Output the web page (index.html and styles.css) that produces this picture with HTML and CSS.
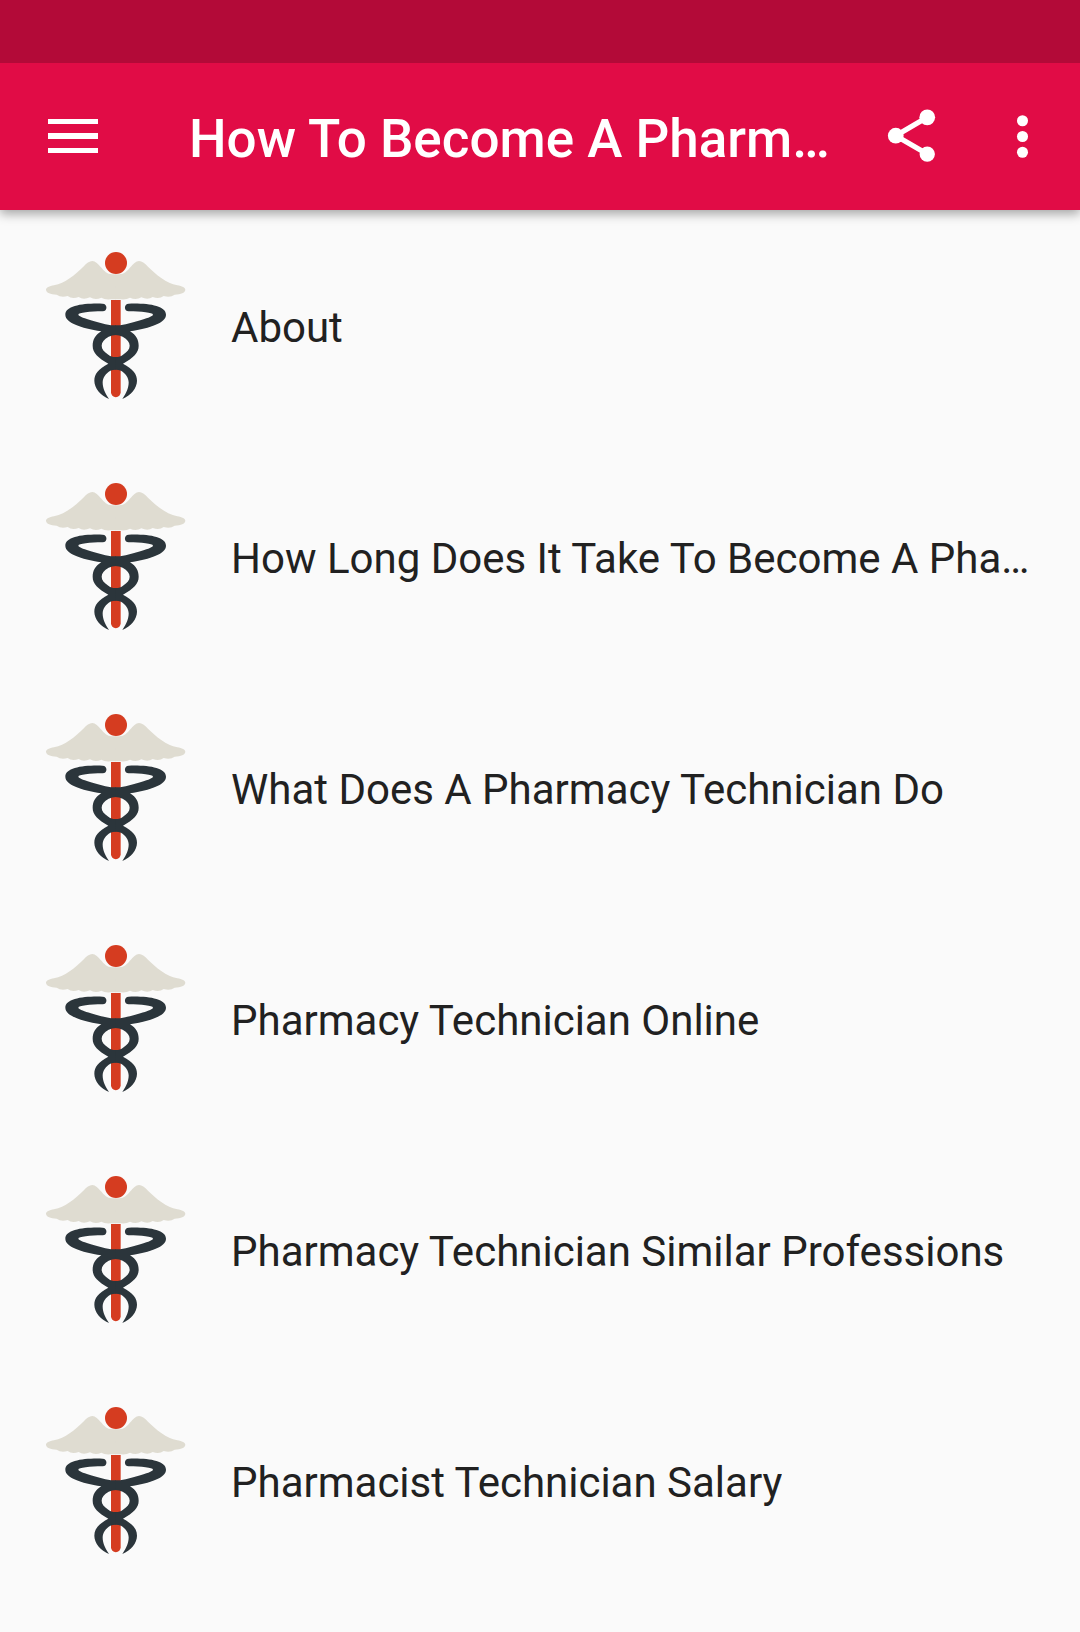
FILE: index.html
```html
<!DOCTYPE html>
<html lang="en">
<head>
<meta charset="utf-8">
<meta name="viewport" content="width=device-width, initial-scale=1">
<title>How To Become A Pharmacy Technician</title>
<link rel="stylesheet" href="styles.css">
</head>
<body>
<svg class="sprite" aria-hidden="true">
  <defs>
    <g id="wing">
      <path fill="#dfdcd1" d="M258 118H246C232 118 222 108 213 97C205 88 196 78 187 78C178 78 170 85 160 95C135 120 105 144 72 151C58 153 48 158 48 165C50 174 60 178 80 179Q93 189 113 183Q126 193 146 186Q160 196 180 187Q196 197 214 188Q225 195 242 193H258Z"/>
    </g>
    <g id="snake">
      <path fill="#2b353b" d="M218 206C160 204 106 212 106 239C106 263 152 279 214 289C195 300 188 315 188 332C188 354 204 368 235 386C205 402 193 417 193 437C193 460 212 481 237 492C223 472 218 457 218 442C218 428 228 414 241 407Q248 404 258 404V366C247 366 240 363 235 359C222 350 215 342 215 332C215 322 222 313 236 305Q246 300 258 300V271H243C200 262 145 246 145 239C145 233 180 229 218 229C233 229 233 206 218 206Z"/>
    </g>
    <symbol id="caduceus" viewBox="36 51 441 441">
      <path fill="#d53c20" d="M243 195H272V472A14 14 0 0 1 243 472Z"/>
      <circle fill="#d53c20" cx="258" cy="84" r="33"/>
      <use href="#wing"/>
      <use href="#wing" transform="translate(514 0) scale(-1 1)"/>
      <use href="#snake"/>
      <use href="#snake" transform="translate(514 0) scale(-1 1)"/>
    </symbol>
  </defs>
</svg>

<header class="app-header">
  <div class="status-bar"></div>
  <div class="toolbar">
    <button class="menu-button" type="button" aria-label="Open menu">
      <svg class="icon" viewBox="0 0 63 63" aria-hidden="true"><path d="M6 14h50v5H6zM6 28h50v6H6zM6 43h50v5H6z"/></svg>
    </button>
    <h1 class="title">How To Become A Pharmacy Technician</h1>
    <button class="share-button" type="button" aria-label="Share">
      <svg class="icon" viewBox="0 0 24 24" aria-hidden="true"><path d="M18 4.700L6 11.700l12 7" fill="none" stroke="currentColor" stroke-width="2"/><circle cx="18" cy="4.700" r="3"/><circle cx="6" cy="11.700" r="3"/><circle cx="18" cy="18.700" r="2.920"/></svg>
    </button>
    <button class="more-button" type="button" aria-label="More options">
      <svg class="icon" viewBox="0 0 24 24" aria-hidden="true"><circle cx="12" cy="6" r="2.100"/><circle cx="12" cy="12" r="2.100"/><circle cx="12" cy="18" r="2.100"/></svg>
    </button>
  </div>
</header>

<main>
  <ul class="topics">
    <li><a class="topic" href="#about"><svg class="thumb" aria-hidden="true"><use href="#caduceus"/></svg><span class="label">About</span></a></li>
    <li><a class="topic" href="#how-long"><svg class="thumb" aria-hidden="true"><use href="#caduceus"/></svg><span class="label">How Long Does It Take To Become A Pharmacy Technician</span></a></li>
    <li><a class="topic" href="#what-does"><svg class="thumb" aria-hidden="true"><use href="#caduceus"/></svg><span class="label">What Does A Pharmacy Technician Do</span></a></li>
    <li><a class="topic" href="#online"><svg class="thumb" aria-hidden="true"><use href="#caduceus"/></svg><span class="label">Pharmacy Technician Online</span></a></li>
    <li><a class="topic" href="#similar"><svg class="thumb" aria-hidden="true"><use href="#caduceus"/></svg><span class="label">Pharmacy Technician Similar Professions</span></a></li>
    <li><a class="topic" href="#salary"><svg class="thumb" aria-hidden="true"><use href="#caduceus"/></svg><span class="label">Pharmacist Technician Salary</span></a></li>
  </ul>
</main>
</body>
</html>
```
FILE: styles.css
```css
* {
  box-sizing: border-box;
}

body {
  margin: 0;
  background: #fafafa;
  color: #212121;
  font-family: Roboto, "Noto Sans", sans-serif;
}

.sprite {
  display: block;
  width: 0;
  height: 0;
}

.app-header {
  background: #e10c46;
  color: #fff;
  box-shadow: 0 4px 10px rgba(0, 0, 0, 0.34);
}

.status-bar {
  height: 63px;
  background: #b30a38;
}

.toolbar {
  display: flex;
  align-items: center;
  height: 147px;
  padding-right: 10px;
}

.toolbar button {
  display: flex;
  flex: none;
  align-items: center;
  justify-content: center;
  height: 126px;
  padding: 0;
  border: 0;
  background: none;
  color: inherit;
}

.toolbar .menu-button {
  width: 147px;
}

.toolbar .share-button {
  width: 126px;
}

.toolbar .more-button {
  width: 96px;
}

.icon {
  width: 63px;
  height: 63px;
  fill: currentColor;
}

.title {
  flex: 1;
  min-width: 0;
  margin: 0 0 0 42px;
  padding-top: 4px;
  overflow: hidden;
  font-size: 53px;
  font-weight: 500;
  line-height: 64px;
  text-overflow: ellipsis;
  white-space: nowrap;
}

.topics {
  margin: 0;
  padding: 0;
  list-style: none;
}

.topic {
  display: flex;
  align-items: center;
  gap: 42px;
  padding: 42px;
  color: inherit;
  text-decoration: none;
}

.thumb {
  flex: none;
  width: 147px;
  height: 147px;
}

.label {
  min-width: 0;
  padding-top: 4px;
  overflow: hidden;
  font-size: 42px;
  line-height: 50px;
  text-overflow: ellipsis;
  white-space: nowrap;
}
```
